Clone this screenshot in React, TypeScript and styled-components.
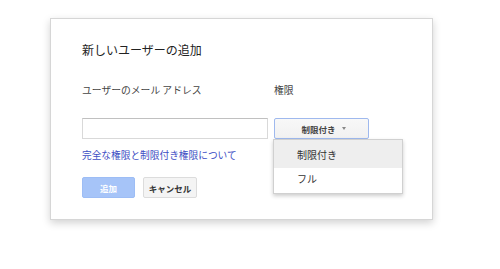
import styled, { createGlobalStyle } from 'styled-components';

const GlobalStyle = createGlobalStyle`
  html, body {
    margin: 0;
    padding: 0;
    background: #ffffff;
    font-family: "Noto Sans CJK JP", "Liberation Sans", Arial, sans-serif;
  }
`;

function App() {
  return (
    <>
      <GlobalStyle />
      <Page>
        <Dialog>
          <Title>新しいユーザーの追加</Title>
          <FieldGrid>
            <Label>ユーザーのメール アドレス</Label>
            <Label>権限</Label>
            <EmailInput />
            <DropdownWrap>
              <DropdownButton>
                制限付き
                <Arrow />
              </DropdownButton>
              <Menu>
                <MenuItem $active>制限付き</MenuItem>
                <MenuItem>フル</MenuItem>
              </Menu>
            </DropdownWrap>
          </FieldGrid>
          <HelpLink href="#">完全な権限と制限付き権限について</HelpLink>
          <Buttons>
            <PrimaryButton>追加</PrimaryButton>
            <SecondaryButton>キャンセル</SecondaryButton>
          </Buttons>
        </Dialog>
      </Page>
    </>
  );
}

const Page = styled.div`
  width: 500px;
  height: 269px;
  padding: 18px 0 0 50px;
  box-sizing: border-box;
  overflow: hidden;
`;

const Dialog = styled.div`
  width: 383px;
  height: 202px;
  box-sizing: border-box;
  border: 1px solid #d6d6d6;
  background: #fff;
  box-shadow: 0 3px 8px rgba(0, 0, 0, 0.18);
  padding: 23px 0 0 31px;
`;

const Title = styled.div`
  font-size: 12px;
  line-height: 16px;
  color: #222;
`;

const FieldGrid = styled.div`
  display: grid;
  grid-template-columns: 186px 95px;
  column-gap: 6px;
  row-gap: 21px;
  margin-top: 25px;
`;

const Label = styled.div`
  font-size: 9.8px;
  line-height: 14px;
  color: #444;
`;

const EmailInput = styled.input`
  width: 186px;
  height: 21px;
  box-sizing: border-box;
  border: 1px solid #d9d9d9;
  border-top-color: #c0c0c0;
  margin: 0;
  outline: none;
`;

const DropdownWrap = styled.div`
  position: relative;
`;

const DropdownButton = styled.div`
  display: flex;
  align-items: center;
  justify-content: center;
  gap: 6px;
  width: 95px;
  height: 21px;
  box-sizing: border-box;
  border: 1px solid #9fb9ee;
  border-radius: 2px;
  background: linear-gradient(#f8f8f8, #f1f1f1);
  font-size: 8.5px;
  font-weight: bold;
  color: #444;
  padding-left: 4px;
`;

const Arrow = styled.span`
  width: 0;
  height: 0;
  border-left: 2.5px solid transparent;
  border-right: 2.5px solid transparent;
  border-top: 3px solid #888;
`;

const Menu = styled.div`
  position: absolute;
  top: 21px;
  left: -1px;
  width: 130px;
  box-sizing: border-box;
  background: #fff;
  border: 1px solid #d0d0d0;
  box-shadow: 0 2px 4px rgba(0, 0, 0, 0.2);
  padding: 0 0 5px;
`;

const MenuItem = styled.div<{ $active?: boolean }>`
  height: ${(p) => (p.$active ? '28px' : '20px')};
  display: flex;
  align-items: center;
  padding-left: 23px;
  font-size: 10px;
  color: #333;
  background: ${(p) => (p.$active ? '#eeeeee' : 'transparent')};
`;

const HelpLink = styled.a`
  display: block;
  margin-top: 9px;
  font-size: 9.7px;
  line-height: 14px;
  color: #3d4ec4;
  text-decoration: none;
`;

const Buttons = styled.div`
  display: flex;
  gap: 8px;
  margin-top: 15px;
`;

const BaseButton = styled.div`
  height: 21px;
  box-sizing: border-box;
  display: flex;
  align-items: center;
  justify-content: center;
  border-radius: 2px;
  font-size: 8.5px;
  font-weight: bold;
`;

const PrimaryButton = styled(BaseButton)`
  width: 53px;
  background: #a6c4f8;
  border: 1px solid #9dbdf5;
  color: #fff;
`;

const SecondaryButton = styled(BaseButton)`
  width: 54px;
  background: #f4f4f4;
  border: 1px solid #dcdcdc;
  color: #333;
`;

export default App;
